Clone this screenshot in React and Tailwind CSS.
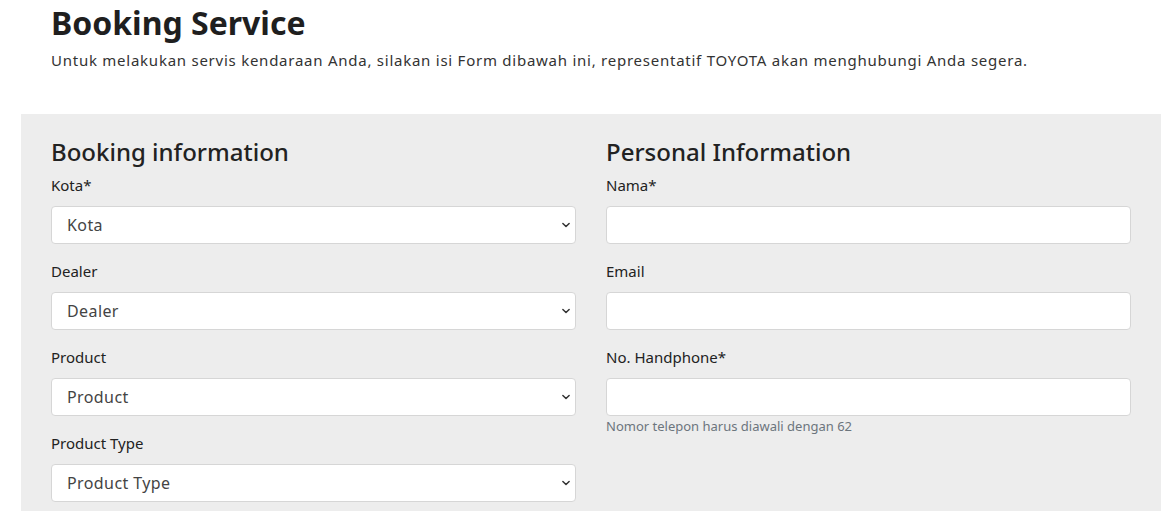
const bookingFields = [
  { label: "Kota*", placeholder: "Kota" },
  { label: "Dealer", placeholder: "Dealer" },
  { label: "Product", placeholder: "Product" },
  { label: "Product Type", placeholder: "Product Type" },
];

const personalFields = [
  { label: "Nama*" },
  { label: "Email" },
  { label: "No. Handphone*", help: "Nomor telepon harus diawali dengan 62" },
];

const SelectField = ({ label, placeholder }) => (
  <div className="flex flex-col">
    <label className="text-[15px] leading-[22px] text-[#222] mb-[10px]">{label}</label>
    <div className="relative">
      <select className="appearance-none w-full h-[38px] bg-white border border-[#d6d6d6] rounded-[4px] pl-[15px] pr-8 text-[16px] tracking-[0.4px] text-[#444] outline-none">
        <option>{placeholder}</option>
      </select>
      <svg className="absolute right-[5px] top-[14px] w-[10px] h-[10px] pointer-events-none" viewBox="0 0 16 16">
        <path d="M3 5.5l5 5 5-5" fill="none" stroke="#333" strokeWidth="2.4" strokeLinecap="round" strokeLinejoin="round" />
      </svg>
    </div>
  </div>
);

const InputField = ({ label, help }) => (
  <div className="flex flex-col">
    <label className="text-[15px] leading-[22px] text-[#222] mb-[10px]">{label}</label>
    <input className="w-full h-[38px] bg-white border border-[#d6d6d6] rounded-[4px] px-4 text-[16px] outline-none" />
    {help && <p className="text-[13px] leading-[18px] text-[#6c757d] mt-[1px]">{help}</p>}
  </div>
);

export default function App() {
  return (
    <div className="min-h-[511px] bg-white" style={{ fontFamily: '"Noto Sans", Lato, sans-serif' }}>
      <div className="ml-[21px] w-[1140px]">
        <div className="px-[30px] pt-[3px] pb-[43px]">
          <h1 className="text-[32px] leading-[40px] font-bold text-[#1f1f1f]">Booking Service</h1>
          <p className="mt-[6px] text-[15px] leading-[22px] tracking-[0.75px] text-[#333]">
            Untuk melakukan servis kendaraan Anda, silakan isi Form dibawah ini, representatif TOYOTA akan menghubungi Anda segera.
          </p>
        </div>
        <div className="bg-[#ededed] px-[30px] pt-[22px] pb-[20px] grid grid-cols-2 gap-x-[30px]">
          <div className="flex flex-col">
            <h2 className="text-[24px] leading-[32px] font-medium text-[#222] mb-[6px]">Booking information</h2>
            <div className="flex flex-col gap-[16px]">
              {bookingFields.map((f) => (
                <SelectField key={f.label} {...f} />
              ))}
            </div>
          </div>
          <div className="flex flex-col">
            <h2 className="text-[24px] leading-[32px] font-medium text-[#222] mb-[6px]">Personal Information</h2>
            <div className="flex flex-col gap-[16px]">
              {personalFields.map((f) => (
                <InputField key={f.label} {...f} />
              ))}
            </div>
          </div>
        </div>
      </div>
    </div>
  );
}
